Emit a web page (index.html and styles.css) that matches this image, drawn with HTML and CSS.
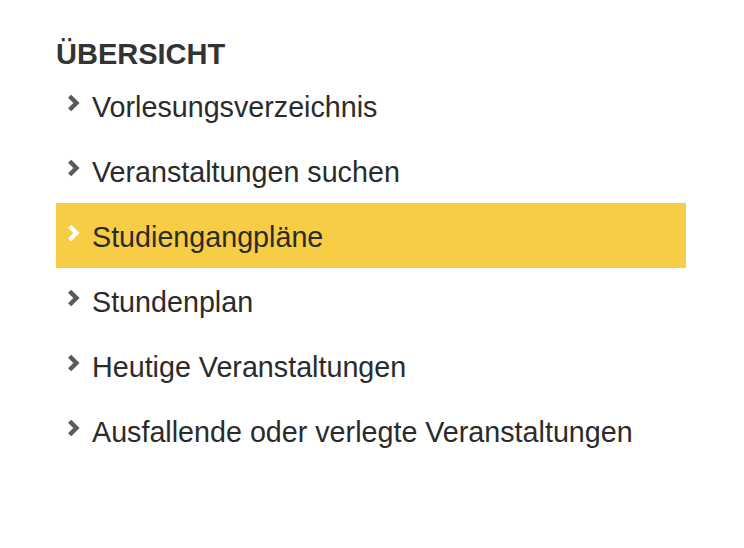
FILE: index.html
```html
<!DOCTYPE html>
<html lang="de">
<head>
  <meta charset="UTF-8" />
  <meta name="viewport" content="width=device-width, initial-scale=1.0"/>
  <title>Übersicht</title>
  <link rel="stylesheet" href="styles.css">
</head>
<body>

  <!-- Sidebar navigation -->
  <nav class="side-nav">
    <h2 class="nav-title">ÜBERSICHT</h2>
    <ul class="nav-list">
      <li class="nav-item">
        <svg class="chevron" viewBox="0 0 12 16"><path d="M3 2 L9 8 L3 14"/></svg>
        <span>Vorlesungsverzeichnis</span>
      </li>
      <li class="nav-item">
        <svg class="chevron" viewBox="0 0 12 16"><path d="M3 2 L9 8 L3 14"/></svg>
        <span>Veranstaltungen suchen</span>
      </li>
      <li class="nav-item active">
        <svg class="chevron" viewBox="0 0 12 16"><path d="M3 2 L9 8 L3 14"/></svg>
        <span>Studiengangpläne</span>
      </li>
      <li class="nav-item">
        <svg class="chevron" viewBox="0 0 12 16"><path d="M3 2 L9 8 L3 14"/></svg>
        <span>Stundenplan</span>
      </li>
      <li class="nav-item">
        <svg class="chevron" viewBox="0 0 12 16"><path d="M3 2 L9 8 L3 14"/></svg>
        <span>Heutige Veranstaltungen</span>
      </li>
      <li class="nav-item">
        <svg class="chevron" viewBox="0 0 12 16"><path d="M3 2 L9 8 L3 14"/></svg>
        <span>Ausfallende oder verlegte Veranstaltungen</span>
      </li>
    </ul>
  </nav>

</body>
</html>
```

FILE: styles.css
```css
body {
  margin: 0;
  font-family: 'Liberation Sans', Arial, sans-serif;
  background: #fff;
  color: #333;
}

.side-nav {
  width: 630px;
  padding: 40px 0 0 56px;
}

.nav-title {
  margin: 0 0 5px 0;
  font-size: 29px;
  line-height: 28px;
  font-weight: bold;
  color: #333;
}

.nav-list {
  list-style: none;
  margin: 0;
  padding: 0;
}

.nav-item {
  display: flex;
  align-items: center;
  box-sizing: border-box;
  height: 65px;
  padding: 3px 0 0 10px;
  font-size: 28.7px;
  color: #2b2b2b;
}

.nav-item.active {
  background-color: #f6cd45;
}

.chevron {
  width: 14px;
  height: 18px;
  margin: 0 12px 8px 0;
  flex-shrink: 0;
  filter: blur(0.5px);
}

.chevron path {
  fill: none;
  stroke: #5a5a5a;
  stroke-width: 4;
  stroke-linecap: butt;
  stroke-linejoin: miter;
}

.nav-item.active .chevron path {
  stroke: #fff;
}
```
